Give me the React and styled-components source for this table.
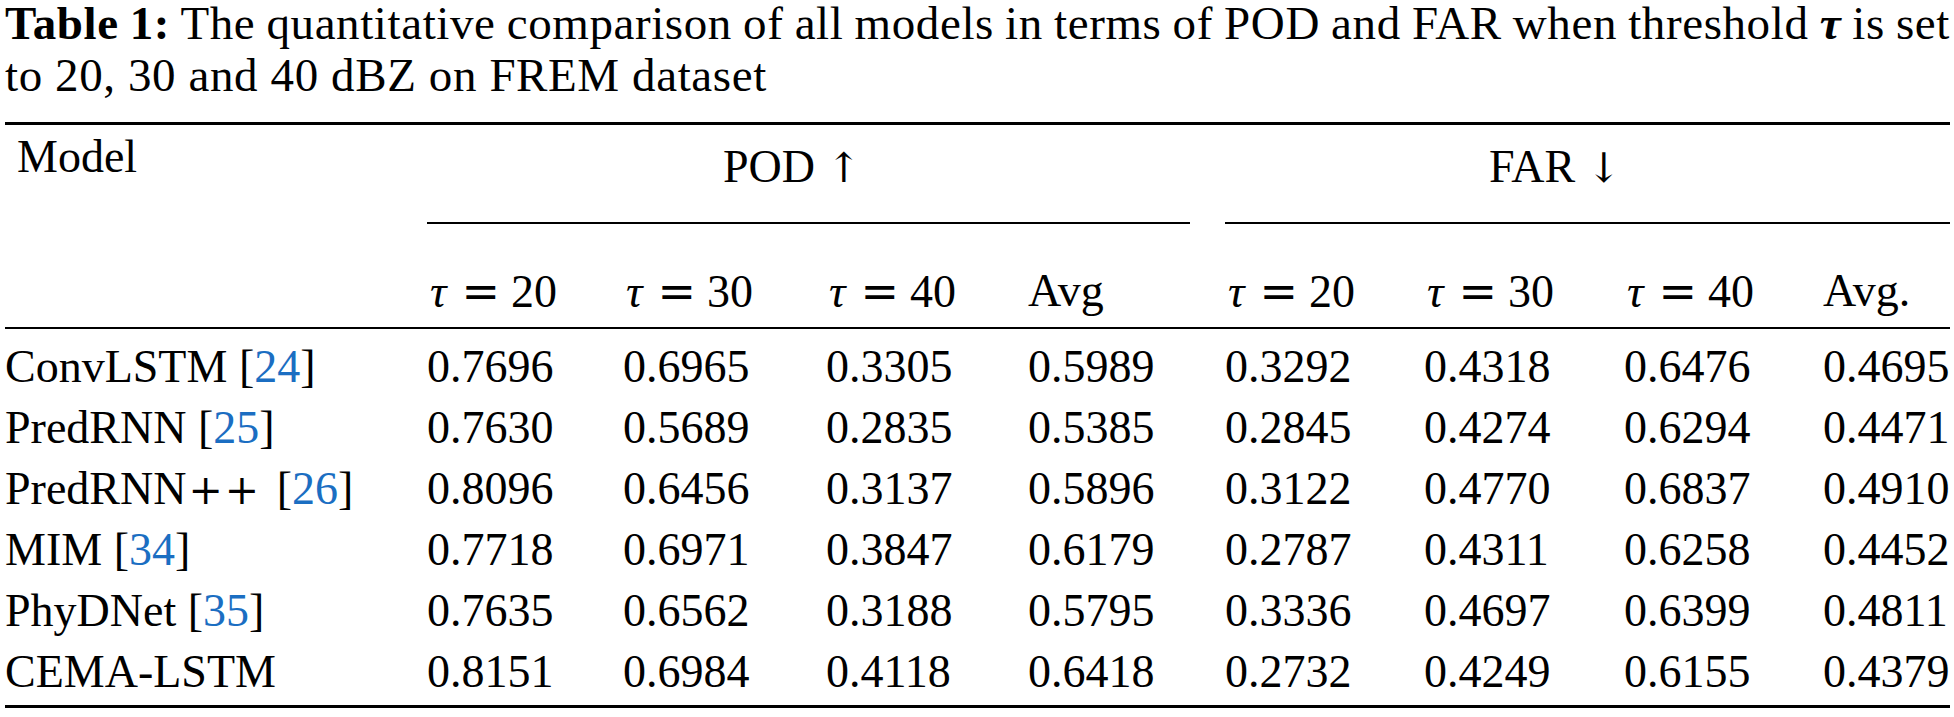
import React from "react";
import styled, { createGlobalStyle } from "styled-components";

const GlobalStyle = createGlobalStyle`
  html, body {
    margin: 0;
    padding: 0;
    background: #ffffff;
  }
  body {
    font-family: "Liberation Serif", "Times New Roman", serif;
    color: #000000;
  }
`;

// column widths, so the columns start where they do in the paper
const COLS = "422px 196px 203px 202px 197px 199px 200px 199px 127px";

const rows = [
  { model: "ConvLSTM", cite: "24", pod: ["0.7696", "0.6965", "0.3305", "0.5989"], far: ["0.3292", "0.4318", "0.6476", "0.4695"] },
  { model: "PredRNN", cite: "25", pod: ["0.7630", "0.5689", "0.2835", "0.5385"], far: ["0.2845", "0.4274", "0.6294", "0.4471"] },
  { model: "PredRNN", plus: true, cite: "26", pod: ["0.8096", "0.6456", "0.3137", "0.5896"], far: ["0.3122", "0.4770", "0.6837", "0.4910"] },
  { model: "MIM", cite: "34", pod: ["0.7718", "0.6971", "0.3847", "0.6179"], far: ["0.2787", "0.4311", "0.6258", "0.4452"] },
  { model: "PhyDNet", cite: "35", pod: ["0.7635", "0.6562", "0.3188", "0.5795"], far: ["0.3336", "0.4697", "0.6399", "0.4811"] },
  { model: "CEMA-LSTM", cite: null, pod: ["0.8151", "0.6984", "0.4118", "0.6418"], far: ["0.2732", "0.4249", "0.6155", "0.4379"] },
];

const TauLabel = ({ t }) => (
  <SubHead>
    <Tau>τ</Tau>
    <Eq>=</Eq>
    {t}
  </SubHead>
);

function App() {
  return (
    <>
      <GlobalStyle />
      <Page>
        <Caption>
          <CaptionLine $justify>
            <b>Table 1:</b> The quantitative comparison of all models in terms of POD and FAR when threshold <BoldTau>τ</BoldTau> is set
          </CaptionLine>
          <CaptionLine>to 20, 30 and 40 dBZ on FREM dataset</CaptionLine>
        </Caption>

        <Rule $w={3} $top={20} />

        <Head>
          <ModelCell>Model</ModelCell>
          <GroupCell $from={2} $to={6} $indent={296}>
            POD <Arrow>↑</Arrow>
          </GroupCell>
          <GroupCell $from={6} $to={10} $indent={264}>
            FAR <Arrow>↓</Arrow>
          </GroupCell>
          <CMid $from={2} $to={6} $trim={35} />
          <CMid $from={6} $to={10} $trim={0} />
          <TauLabel t="20" />
          <TauLabel t="30" />
          <TauLabel t="40" />
          <SubHead>Avg</SubHead>
          <TauLabel t="20" />
          <TauLabel t="30" />
          <TauLabel t="40" />
          <SubHead>Avg.</SubHead>
        </Head>

        <Rule $w={2} $top={0} />

        <Body>
          {rows.map((r, idx) => (
            <Row key={idx}>
              <Cell>
                {r.model}
                {r.plus && <Plus>++</Plus>}
                {r.cite && (
                  <>
                    {" "}[<Cite>{r.cite}</Cite>]
                  </>
                )}
              </Cell>
              {[...r.pod, ...r.far].map((v, i) => (
                <Cell key={i}>{v}</Cell>
              ))}
            </Row>
          ))}
        </Body>

        <Rule $w={3} $top={2} />
      </Page>
    </>
  );
}

const Page = styled.div`
  width: 1945px;
  margin-left: 5px;
  font-size: 46px;
`;

const Caption = styled.div`
  margin-top: -3.5px;
  font-size: 47px;
  line-height: 52.5px;
  letter-spacing: 0.6px;
`;

const CaptionLine = styled.div`
  text-align: ${(p) => (p.$justify ? "justify" : "left")};
  text-align-last: ${(p) => (p.$justify ? "justify" : "auto")};
  word-spacing: ${(p) => (p.$justify ? "-3px" : "0")};
`;

const BoldTau = styled.b`
  font-style: italic;
`;

const Rule = styled.div`
  height: ${(p) => p.$w}px;
  margin-top: ${(p) => p.$top}px;
  background: #000;
`;

const Head = styled.div`
  display: grid;
  grid-template-columns: ${COLS};
  grid-template-rows: 97px 2px 103px;
  line-height: 58px;
`;

const ModelCell = styled.div`
  grid-row: 1 / 4;
  grid-column: 1;
  padding: 3px 0 0 12px;
`;

const GroupCell = styled.div`
  grid-row: 1;
  grid-column: ${(p) => p.$from} / ${(p) => p.$to};
  padding-top: 13.5px;
  padding-left: ${(p) => p.$indent}px;
  white-space: nowrap;
`;

const Arrow = styled.span`
  font-family: "DejaVu Serif", serif;
  font-size: 41px;
`;

const CMid = styled.div`
  grid-row: 2;
  grid-column: ${(p) => p.$from} / ${(p) => p.$to};
  margin-right: ${(p) => p.$trim}px;
  background: #000;
`;

const SubHead = styled.div`
  grid-row: 3;
  padding-top: 38px;
  white-space: nowrap;
`;

const Tau = styled.i`
  padding-left: 3px;
`;

const Eq = styled.span`
  font-family: "DejaVu Serif", serif;
  margin: 0 11px 0 15px;
`;

const Plus = styled.span`
  font-family: "DejaVu Serif", serif;
  font-size: 41px;
  letter-spacing: 2px;
  margin: 0 4px 0 2px;
`;

const Body = styled.div`
  padding-top: 7.5px;
`;

const Row = styled.div`
  display: grid;
  grid-template-columns: ${COLS};
  height: 61.1px;
  line-height: 61.1px;
`;

const Cell = styled.div`
  white-space: nowrap;
`;

const Cite = styled.span`
  color: #1b6ec2;
`;

export default App;
